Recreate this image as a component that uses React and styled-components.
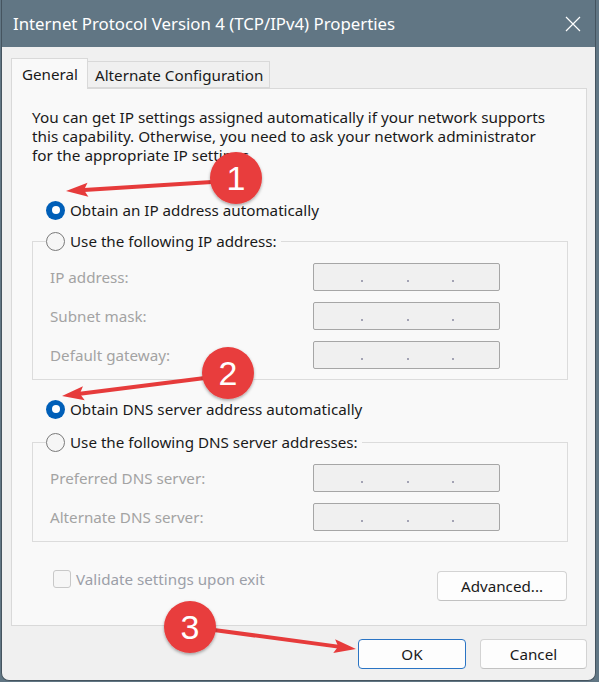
import React from "react";
import styled, { createGlobalStyle } from "styled-components";

const GlobalStyle = createGlobalStyle`
  html, body {
    margin: 0;
    padding: 0;
    background: #617684;
  }
  body {
    font-family: "Noto Sans", "Liberation Sans", sans-serif;
    color: #1a1a1a;
  }
`;

const Page = styled.div`
  position: relative;
  width: 599px;
  height: 682px;
`;

const Window = styled.div`
  box-sizing: border-box;
  width: 595px;
  height: 681px;
  margin-left: 1px;
  background: #f0f0f0;
  border: 1px solid #45545f;
  border-top: none;
  border-radius: 0 0 8px 8px;
  display: flex;
  flex-direction: column;
  overflow: hidden;
`;

const TitleBar = styled.div`
  height: 47px;
  flex-shrink: 0;
  background: #617684;
  display: flex;
  align-items: center;
  justify-content: space-between;
  padding: 0 13px 0 11px;
  color: #ffffff;
  font-size: 16.8px;
`;

const CloseButton = styled.div`
  width: 18px;
  height: 18px;
  display: flex;
  align-items: center;
  justify-content: center;
`;

const Body = styled.div`
  flex: 1;
  padding: 11px 8px 0 9px;
  display: flex;
  flex-direction: column;
`;

const TabStrip = styled.div`
  display: flex;
  align-items: flex-end;
  height: 30px;
`;

const Tab = styled.div`
  position: relative;
  z-index: 1;
  box-sizing: border-box;
  width: ${(p) => p.$width}px;
  height: ${(p) => (p.$active ? 31 : 27)}px;
  margin-bottom: ${(p) => (p.$active ? -1 : 0)}px;
  padding-left: ${(p) => (p.$active ? 10 : 7)}px;
  border: 1px solid #d9d9d9;
  border-bottom: ${(p) => (p.$active ? "none" : "1px solid #d9d9d9")};
  border-left: ${(p) => (p.$active ? "1px solid #d9d9d9" : "none")};
  background: ${(p) => (p.$active ? "#f9f9f9" : "#f0f0f0")};
  display: flex;
  align-items: center;
  font-size: 15.2px;
  color: #1a1a1a;
  padding-bottom: ${(p) => (p.$active ? 1 : 0)}px;
`;

const Panel = styled.div`
  box-sizing: border-box;
  height: 538px;
  background: #f9f9f9;
  border: 1px solid #d9d9d9;
  padding: 19px 18px 0 20px;
  display: flex;
  flex-direction: column;
`;

const Description = styled.p`
  margin: 0;
  font-size: 15.3px;
  line-height: 19px;
  color: #1a1a1a;
  white-space: nowrap;
`;

const RadioRow = styled.label`
  display: flex;
  align-items: center;
  gap: 5px;
  height: 20px;
  margin-left: ${(p) => (p.$inLegend ? 0 : 14)}px;
  margin-top: ${(p) => p.$top || 0}px;
  font-size: 15.2px;
  color: #1a1a1a;
  white-space: nowrap;
`;

const RadioDot = styled.span`
  box-sizing: border-box;
  width: 19px;
  height: 19px;
  border-radius: 50%;
  flex-shrink: 0;
  background: ${(p) => (p.$checked ? "#005fb8" : "#f6f6f6")};
  border: ${(p) => (p.$checked ? "none" : "1px solid #7a7a7a")};
  display: flex;
  align-items: center;
  justify-content: center;

  &::after {
    content: "";
    display: ${(p) => (p.$checked ? "block" : "none")};
    width: 8px;
    height: 8px;
    border-radius: 50%;
    background: #ffffff;
  }
`;

const Group = styled.fieldset`
  margin: ${(p) => p.$top}px 0 0 0;
  padding: 12px 0 10px 13px;
  min-width: 0;
  border: 1px solid #dcdcdc;
`;

const Legend = styled.legend`
  padding: 0 4px 0 0;
  margin-left: 0;
`;

const FieldList = styled.div`
  display: flex;
  flex-direction: column;
  gap: 11px;
`;

const FieldRow = styled.div`
  display: grid;
  grid-template-columns: 263px 187px;
  align-items: center;
  padding-left: 4px;
  height: 28px;
`;

const FieldLabel = styled.span`
  font-size: 15.2px;
  color: #a3a3a3;
  white-space: nowrap;
`;

const IpBox = styled.div`
  box-sizing: border-box;
  height: 28px;
  width: 187px;
  background: #f0f0f0;
  border: 1px solid #a6a6a6;
  border-radius: 2px;
  display: flex;
  align-items: flex-end;
  padding: 0 2px 6px 4px;
`;

const IpSegment = styled.span`
  flex: 1;
`;

const IpDot = styled.span`
  width: 2px;
  height: 2px;
  background: #8a8aa0;
  border-radius: 1px;
  margin: 0 1px 2px;
`;

const BottomRow = styled.div`
  display: flex;
  align-items: flex-start;
  margin-top: 27px;
`;

const CheckRow = styled.label`
  display: flex;
  align-items: center;
  gap: 5px;
  height: 20px;
  margin-left: 21px;
  font-size: 15.2px;
  color: #9c9fa8;
  white-space: nowrap;
`;

const CheckBox = styled.span`
  box-sizing: border-box;
  width: 18px;
  height: 18px;
  border-radius: 3px;
  border: 1px solid #c8c8c8;
  background: #f6f6f6;
`;

const Button = styled.button`
  box-sizing: border-box;
  width: ${(p) => p.$width}px;
  height: 30px;
  margin-top: ${(p) => p.$top || 0}px;
  margin-left: ${(p) => (p.$push ? "auto" : "0")};
  margin-right: ${(p) => p.$right || 0}px;
  background: #fdfdfd;
  border: 1px solid ${(p) => (p.$primary ? "#2a74c4" : "#d3d3d3")};
  border-bottom-color: ${(p) => (p.$primary ? "#2a74c4" : "#c2c2c2")};
  border-radius: 4px;
  font-family: inherit;
  font-size: 15.2px;
  color: #1a1a1a;
  padding: 0;
`;

const Footer = styled.div`
  display: flex;
  justify-content: flex-end;
  gap: 14px;
  margin-top: 13px;
`;

const Overlay = styled.svg`
  position: absolute;
  top: 0;
  left: 0;
  pointer-events: none;
`;

function Radio({ checked, children, top, inLegend }) {
  return (
    <RadioRow $top={top} $inLegend={inLegend}>
      <RadioDot $checked={checked} />
      {children}
    </RadioRow>
  );
}

function IpField() {
  return (
    <IpBox>
      <IpSegment />
      <IpDot />
      <IpSegment />
      <IpDot />
      <IpSegment />
      <IpDot />
      <IpSegment />
    </IpBox>
  );
}

function Arrow({ x1, y1, x2, y2 }) {
  const dx = x2 - x1;
  const dy = y2 - y1;
  const len = Math.hypot(dx, dy);
  const ux = dx / len;
  const uy = dy / len;
  const head = 22;
  const half = 7;
  const bx = x2 - ux * head;
  const by = y2 - uy * head;
  const pts = [
    [x2, y2],
    [bx - uy * half, by + ux * half],
    [bx + ux * 4, by + uy * 4],
    [bx + uy * half, by - ux * half],
  ]
    .map((p) => p.join(","))
    .join(" ");
  return (
    <g>
      <line x1={x1} y1={y1} x2={bx + ux * 4} y2={by + uy * 4} stroke="#e63b3b" strokeWidth="4" strokeLinecap="round" />
      <polygon points={pts} fill="#e63b3b" />
    </g>
  );
}

function Badge({ cx, cy, n }) {
  return (
    <g>
      <circle cx={cx} cy={cy} r="26" fill="#e83c3c" filter="url(#shadow)" />
      <text
        x={cx}
        y={cy + 12}
        textAnchor="middle"
        fill="#ffffff"
        fontSize="34"
        fontFamily="Liberation Sans, Arial, sans-serif"
      >
        {n}
      </text>
    </g>
  );
}

const ipRows = ["IP address:", "Subnet mask:", "Default gateway:"];
const dnsRows = ["Preferred DNS server:", "Alternate DNS server:"];

export default function App() {
  return (
    <Page>
      <GlobalStyle />
      <Window>
        <TitleBar>
          <span>Internet Protocol Version 4 (TCP/IPv4) Properties</span>
          <CloseButton>
            <svg width="16" height="16" viewBox="0 0 16 16">
              <path d="M1 1 L15 15 M15 1 L1 15" stroke="#ffffff" strokeWidth="1.2" />
            </svg>
          </CloseButton>
        </TitleBar>
        <Body>
          <TabStrip>
            <Tab $active $width={77}>General</Tab>
            <Tab $width={182}>Alternate Configuration</Tab>
          </TabStrip>
          <Panel>
            <Description>
              You can get IP settings assigned automatically if your network supports
              <br />
              this capability. Otherwise, you need to ask your network administrator
              <br />
              for the appropriate IP settings.
            </Description>

            <Radio checked top={35}>Obtain an IP address automatically</Radio>
            <Group $top={11}>
              <Legend>
                <Radio inLegend>Use the following IP address:</Radio>
              </Legend>
              <FieldList>
                {ipRows.map((label) => (
                  <FieldRow key={label}>
                    <FieldLabel>{label}</FieldLabel>
                    <IpField />
                  </FieldRow>
                ))}
              </FieldList>
            </Group>

            <Radio checked top={19}>Obtain DNS server address automatically</Radio>
            <Group $top={13}>
              <Legend>
                <Radio inLegend>Use the following DNS server addresses:</Radio>
              </Legend>
              <FieldList>
                {dnsRows.map((label) => (
                  <FieldRow key={label}>
                    <FieldLabel>{label}</FieldLabel>
                    <IpField />
                  </FieldRow>
                ))}
              </FieldList>
            </Group>

            <BottomRow>
              <CheckRow>
                <CheckBox />
                Validate settings upon exit
              </CheckRow>
              <Button $width={130} $top={2} $push $right={1}>Advanced...</Button>
            </BottomRow>
          </Panel>
          <Footer>
            <Button $width={108} $primary>OK</Button>
            <Button $width={107}>Cancel</Button>
          </Footer>
        </Body>
      </Window>

      <Overlay width="599" height="682" viewBox="0 0 599 682">
        <defs>
          <filter id="shadow" x="-30%" y="-30%" width="160%" height="160%">
            <feDropShadow dx="0" dy="1.5" stdDeviation="1.5" floodColor="#000" floodOpacity="0.35" />
          </filter>
        </defs>
        <Arrow x1={212} y1={182} x2={66} y2={191} />
        <Arrow x1={205} y1={378} x2={62} y2={396} />
        <Arrow x1={214} y1={630} x2={356} y2={649} />
        <Badge cx={236} cy={178} n="1" />
        <Badge cx={228} cy={373} n="2" />
        <Badge cx={190} cy={627} n="3" />
      </Overlay>
    </Page>
  );
}
